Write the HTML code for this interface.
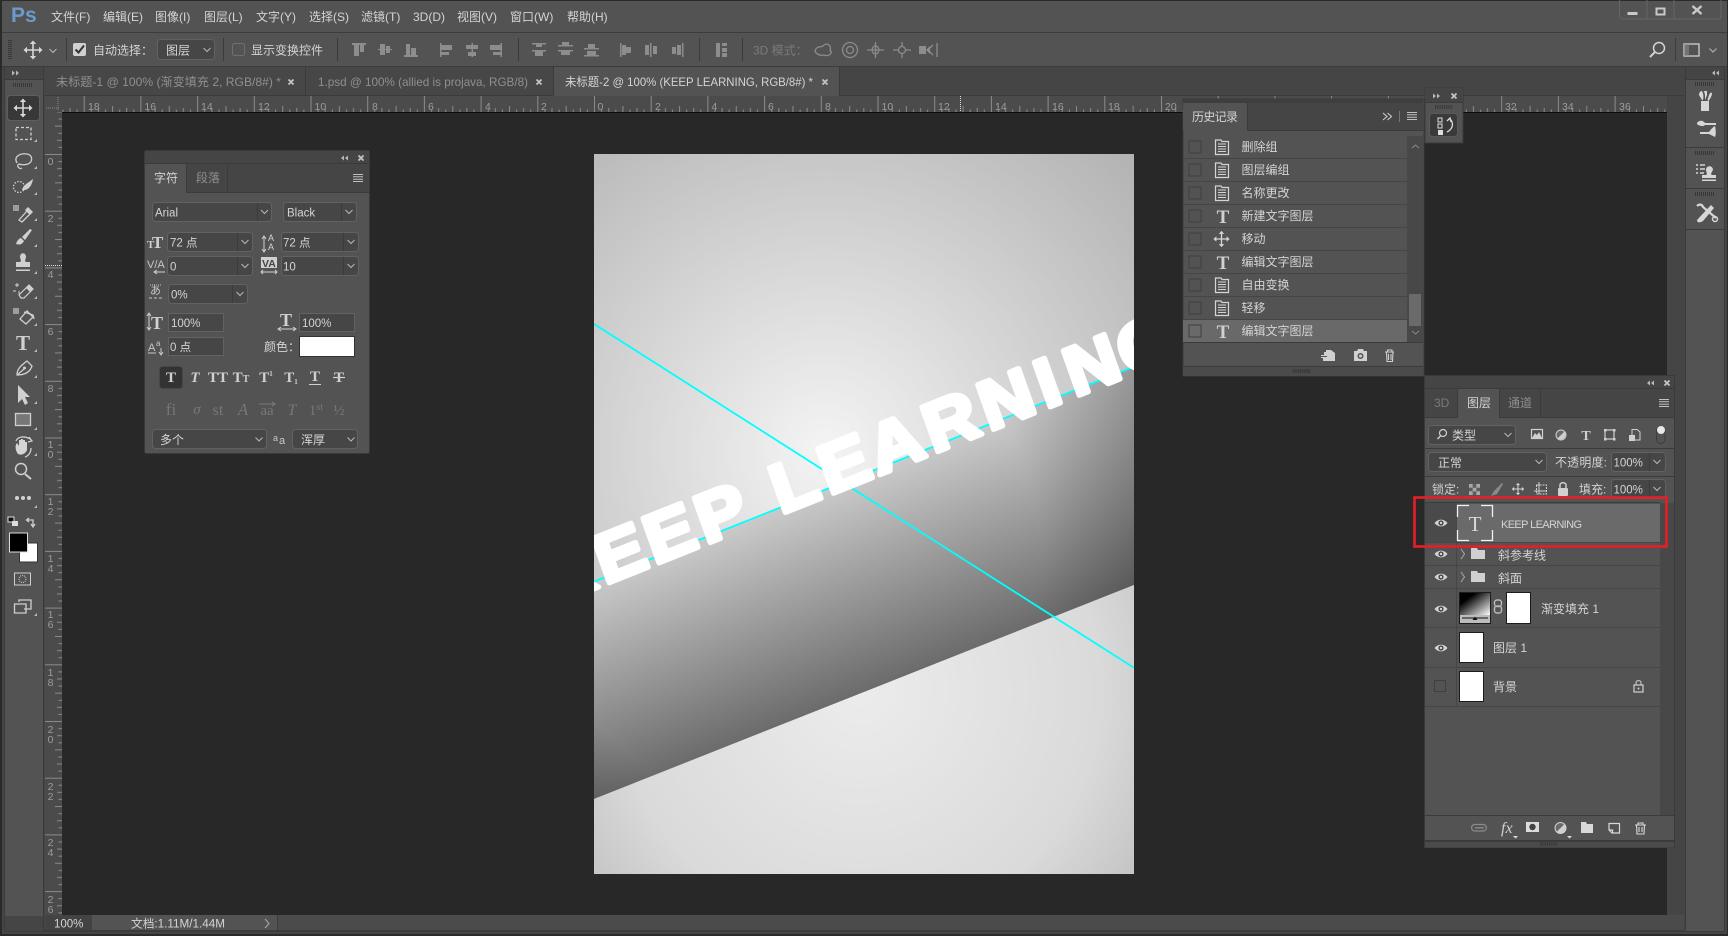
<!DOCTYPE html>
<html>
<head>
<meta charset="utf-8">
<title>Photoshop</title>
<style>
html,body{margin:0;padding:0;background:#2a2a2a;width:1728px;height:936px;overflow:hidden}
svg{display:block}
text{font-family:"Liberation Sans","WenQuanYi Zen Hei","Noto Sans CJK SC",sans-serif;font-size:12px;fill:#d4d4d4}
.m{font-size:12px}
.d{fill:#8f8f8f}
.dd{fill:#7a7a7a}
.r{font-size:10.5px;fill:#9c9c9c}
.rv{font-size:10.5px;fill:#9c9c9c;text-anchor:middle}
.s{font-family:"Liberation Serif",serif;font-weight:bold;fill:#d0d0d0}
.sd{font-family:"Liberation Serif",serif;fill:#777}
.f{fill:#464646;stroke:#626262;stroke-width:1}
.l{stroke:#3b3b3b;stroke-width:1}
.ic{fill:none;stroke:#cfcfcf;stroke-width:1.3}
.id{fill:none;stroke:#8c8c8c;stroke-width:1.3}
.b{fill:#8d8d8d}
.w{fill:#d2d2d2}
.big{font-family:"Liberation Sans",sans-serif;font-weight:bold;font-size:69px;fill:#fff;stroke:#fff;stroke-width:5;stroke-linejoin:round}
</style>
</head>
<body>
<svg xmlns="http://www.w3.org/2000/svg" width="1728" height="936" viewBox="0 0 1728 936">
<defs>
<g id="c"><path d="M-3.5-2 0 1.5 3.5-2" fill="none" stroke="#b8b8b8" stroke-width="1"/></g>
<g id="mv"><path d="M-7 0H7M0-7V7" stroke="#d6d6d6" stroke-width="1.6" fill="none"/><path d="M-9.5 0-6-3.2V3.2ZM9.5 0 6-3.2V3.2ZM0-9.5-3.2-6H3.2ZM0 9.5-3.2 6H3.2Z" fill="#d6d6d6"/></g>
<g id="doc"><path d="M-6.5-7H-1L0-5.5H6.5V7.5H-6.5Z" fill="none" stroke="#d4d4d4" stroke-width="1.2"/><path d="M-4-3H4M-4-.5H4M-4 2H4M-4 4.5H4" stroke="#d4d4d4" stroke-width="1"/></g>
<g id="eye"><path d="M-6.5 0C-3-4.5 3-4.5 6.5 0 3 4.5-3 4.5-6.5 0Z" fill="#d4d4d4"/><circle r="2.6" fill="#444"/><circle r="1.2" fill="#d4d4d4"/></g>
<g id="tri"><path d="M0 3H3V0Z" fill="#bbb"/></g>
<g id="menu"><path d="M-5-3.5H5M-5-1.2H5M-5 1.2H5M-5 3.5H5" stroke="#c0c0c0" stroke-width="1"/></g>
<g id="grip"><path d="M-10 0H10" stroke="#2f2f2f" stroke-width="4" stroke-dasharray="1 1" fill="none" opacity=".75"/></g>
<g id="fold"><path d="M0 0H6L7 2H14V11H0Z" fill="#d0d0d0"/></g>
<g id="cb"><rect x="-6" y="-6" width="12" height="12" fill="none" stroke="#3f3f3f"/></g>
<pattern id="rh" patternUnits="userSpaceOnUse" x="594" y="96" width="56.7" height="17">
<path d="M.5 0V17M7.6 13.5V17M14.7 12V17M21.8 13.5V17M28.9 10V17M36 13.5V17M43 12V17M50.1 13.5V17" stroke="#8b8b8b" stroke-width="1"/>
</pattern>
<pattern id="rv" patternUnits="userSpaceOnUse" x="45" y="154" width="17" height="56.7">
<path d="M0 .5H17M13.5 7.6H17M12 14.7H17M13.5 21.8H17M10 28.9H17M13.5 36H17M12 43H17M13.5 50.1H17" stroke="#8b8b8b" stroke-width="1"/>
</pattern>
<radialGradient id="g1" gradientUnits="userSpaceOnUse" cx="825" cy="450" r="430"><stop offset="0" stop-color="#f4f4f4"/><stop offset="1" stop-color="#b2b2b2"/></radialGradient>
<linearGradient id="g2" gradientUnits="userSpaceOnUse" x1="864" y1="452" x2="960" y2="694"><stop offset="0" stop-color="#d4d4d4"/><stop offset="1" stop-color="#5a5a5a"/></linearGradient>
<radialGradient id="g2b" gradientUnits="userSpaceOnUse" cx="790" cy="560" r="420"><stop offset=".6" stop-color="#000" stop-opacity="0"/><stop offset="1" stop-color="#000" stop-opacity=".3"/></radialGradient>
<radialGradient id="g3" gradientUnits="userSpaceOnUse" cx="860" cy="690" r="400"><stop offset="0" stop-color="#ececec"/><stop offset=".6" stop-color="#dadada"/><stop offset="1" stop-color="#b4b4b4"/></radialGradient>
<linearGradient id="g4" x1="0" y1="0" x2="1" y2="1"><stop offset="0" stop-color="#000"/><stop offset=".25" stop-color="#000"/><stop offset="1" stop-color="#fff"/></linearGradient>
<clipPath id="cv"><rect x="594" y="154" width="540" height="720"/></clipPath>
</defs>

<!-- frame -->
<rect width="1728" height="936" fill="#2a2a2a"/>
<rect x="2" y="1" width="1725" height="933" fill="#454545"/>
<!-- menu -->
<rect x="2" y="1" width="1725" height="31" fill="#535353"/>
<rect x="2" y="32" width="1725" height="1" fill="#3c3c3c"/>
<text x="11" y="22" style="font-size:21px;font-weight:bold;fill:#6c9bcb">Ps</text>
<text class="m" x="51" y="21">文件(F)</text>
<text class="m" x="103" y="21">编辑(E)</text>
<text class="m" x="155" y="21">图像(I)</text>
<text class="m" x="204" y="21">图层(L)</text>
<text class="m" x="256" y="21">文字(Y)</text>
<text class="m" x="309" y="21">选择(S)</text>
<text class="m" x="361" y="21">滤镜(T)</text>
<text class="m" x="413" y="21">3D(D)</text>
<text class="m" x="457" y="21">视图(V)</text>
<text class="m" x="510" y="21">窗口(W)</text>
<text class="m" x="567" y="21">帮助(H)</text>
<!-- window controls -->
<path d="M1619.500 0V16Q1619.500 19 1622.500 19H1718Q1721 19 1721 16V0M1647 0V19M1674 0V19" fill="none" stroke="#666"/>
<rect x="1627.500" y="12" width="10" height="3" fill="#c8c8c8"/>
<rect x="1656.500" y="8.500" width="8" height="6" fill="none" stroke="#c8c8c8" stroke-width="2"/>
<path d="M1692.500 6 1701.500 14M1701.500 6 1692.500 14" stroke="#c8c8c8" stroke-width="2.4"/>

<!-- options bar -->
<rect x="2" y="33" width="1725" height="33" fill="#535353"/>
<rect x="2" y="66" width="1725" height="1" fill="#3c3c3c"/>
<use href="#grip" transform="translate(10 50) rotate(90)"/>
<use href="#mv" x="33" y="50"/>
<use href="#c" x="53" y="51"/>
<path class="l" d="M66.500 38V61M223.500 38V61M337.500 38V61M518.500 38V61M699.500 38V61M742.500 38V61M1675.500 38V61"/>
<rect x="73" y="43" width="13" height="13" rx="2" fill="#d0d0d0"/>
<path d="M75.500 49.500 78.500 52.500 84 45.500" fill="none" stroke="#333" stroke-width="2"/>
<text x="93" y="54.500">自动选择：</text>
<rect class="f" x="157.500" y="39.500" width="57" height="20" rx="3"/>
<text x="166" y="54.500">图层</text>
<use href="#c" x="207" y="50"/>
<rect x="232.500" y="43.500" width="12" height="12" rx="2" fill="none" stroke="#6f6f6f"/>
<text x="251" y="54.500">显示变换控件</text>
<!-- align icons -->
<g class="b">
<rect x="352" y="43" width="14" height="2"/><rect x="354" y="45" width="5" height="11"/><rect x="360" y="45" width="4" height="7"/>
<rect x="378" y="49" width="14" height="1"/><rect x="380" y="44" width="5" height="11"/><rect x="386" y="46" width="4" height="7"/>
<rect x="404" y="55" width="14" height="2"/><rect x="406" y="44" width="4" height="11"/><rect x="411" y="48" width="5" height="7"/>
<rect x="440" y="43" width="1.500" height="14"/><rect x="441" y="45" width="11" height="5"/><rect x="441" y="52" width="8" height="3"/>
<rect x="471.500" y="43" width="1.500" height="14"/><rect x="466" y="45" width="12" height="4"/><rect x="468" y="52" width="8" height="4"/>
<rect x="500.500" y="43" width="1.500" height="14"/><rect x="490" y="45" width="11" height="5"/><rect x="493" y="52" width="8" height="3"/>
<rect x="532" y="43" width="14" height="1.500"/><rect x="532" y="50" width="14" height="1.500"/><rect x="536" y="44" width="6" height="3"/><rect x="535" y="51" width="8" height="5"/>
<rect x="558" y="45" width="15" height="1.500"/><rect x="558" y="50" width="15" height="1.500"/><rect x="562" y="42" width="7" height="3"/><rect x="561" y="51" width="9" height="4"/>
<rect x="584" y="48" width="15" height="1.500"/><rect x="584" y="55" width="15" height="1.500"/><rect x="588" y="44" width="7" height="4"/><rect x="587" y="51" width="9" height="4"/>
<rect x="620" y="43" width="1.500" height="14"/><rect x="622" y="45" width="4" height="10"/><rect x="626" y="47" width="5" height="6"/>
<rect x="650" y="43" width="1.500" height="14"/><rect x="645" y="45" width="4" height="10"/><rect x="653" y="46" width="4" height="8"/>
<rect x="682" y="43" width="1.500" height="14"/><rect x="672" y="47" width="4" height="7"/><rect x="677" y="45" width="4" height="10"/>
<rect x="716" y="43" width="4" height="14"/><rect x="722" y="43" width="5" height="3"/><rect x="722" y="48" width="5" height="4"/><rect x="722" y="53" width="5" height="4"/>
</g>
<text class="dd" x="753" y="54.500">3D 模式：</text>
<g class="id">
<path d="M815 51C816 46 822 47 823 46 826 42 832 45 830 50 834 54 827 57 824 55 820 56 816 54 815 51Z"/>
<circle cx="850" cy="50" r="7.500"/><circle cx="850" cy="50" r="3.500"/>
<path d="M875.500 42V58M867 50H884M875.500 46C871 46 871 54 875.500 54 880 54 880 46 875.500 46Z"/>
<circle cx="902" cy="50" r="3.500"/><path d="M902 42V46M902 54V58M893 50H898M906 50H911"/>
<path d="M933 45 928 50 933 55M937 43V57" />
</g>
<rect x="919" y="46" width="7" height="8" class="b"/><path d="M926 50 930 46V54Z" class="b"/>
<!-- search + workspace -->
<circle cx="1659" cy="48" r="5.500" fill="none" stroke="#d4d4d4" stroke-width="1.500"/>
<path d="M1655 52 1650 57" stroke="#d4d4d4" stroke-width="2"/>
<rect x="1684" y="44" width="15" height="12" fill="none" stroke="#cfcfcf" stroke-width="1.300"/>
<rect x="1684" y="44" width="5" height="12" fill="#8a8a8a" opacity=".6"/>
<use href="#c" x="1713" y="50.500"/>

<!-- tab bar -->
<rect x="44" y="67" width="1640" height="29" fill="#454545"/>
<rect x="44" y="67" width="261" height="28" fill="#474747"/>
<rect x="305" y="67" width="249" height="28" fill="#474747"/>
<rect x="554" y="67" width="285" height="29" fill="#535353"/>
<path class="l" d="M305.500 67V95M553.500 67V95M839.500 67V95M44 95.500H554M839 95.500H1684"/>
<text class="d" x="56" y="86" textLength="225" lengthAdjust="spacingAndGlyphs">未标题-1 @ 100% (渐变填充 2, RGB/8#) *</text>
<text class="d" x="318" y="86" textLength="210" lengthAdjust="spacingAndGlyphs">1.psd @ 100% (allied is projava, RGB/8)</text>
<text x="565" y="86" textLength="248" lengthAdjust="spacingAndGlyphs">未标题-2 @ 100% (KEEP LEARNING, RGB/8#) *</text>
<path d="M288.500 79.500 293.500 84.500M293.500 79.500 288.500 84.500M536.500 79.500 541.500 84.500M541.500 79.500 536.500 84.500M822.500 79.500 827.500 84.500M827.500 79.500 822.500 84.500" stroke="#c4c4c4" stroke-width="1.800"/>

<!-- left toolbar -->
<rect x="5" y="67" width="38" height="849" fill="#535353"/>
<rect x="5" y="67" width="38" height="12" fill="#454545"/>
<path d="M12 70.500 15 73 12 75.500ZM16 70.500 19 73 16 75.500Z" fill="#b8b8b8"/>
<path class="l" d="M4.500 67V932M43.500 67V932M5 79.500H43M5 931.500H44"/>
<use href="#grip" x="23" y="85"/>
<rect x="7.500" y="95.500" width="32" height="25" rx="3" fill="#383838" stroke="#5e5e5e"/>
<use href="#mv" x="23" y="108"/>
<!-- marquee -->
<rect x="16" y="127.500" width="15" height="12" fill="none" stroke="#cfcfcf" stroke-width="1.300" stroke-dasharray="3 2"/>
<!-- lasso -->
<path class="ic" d="M17 163C13 156 21 153 27 154 33 155 33 162 28 164 25 165 21 165 19 164 16 165 19 170 22 168" />
<!-- quick select -->
<circle cx="19" cy="187" r="5.500" fill="none" stroke="#d0d0d0" stroke-width="1.300" stroke-dasharray="1.500 1.500"/>
<path d="M22 190C23 185 28 183 33 179 32 185 29 191 22 190Z" fill="#d0d0d0"/>
<!-- eyedropper -->
<rect x="13" y="205" width="6" height="6" fill="#b0b0b0" opacity=".8"/>
<path class="ic" d="M19 220 27 211 30 214 22 222Z"/><path d="M28 207 33 212 30 215 25 210Z" fill="#d0d0d0"/>
<!-- brush -->
<path d="M16 244C17 240 20 238 21 238L24 241C22 245 19 245 16 244ZM22 237 30 229 32 230 25 240Z" fill="#d0d0d0"/>
<!-- stamp -->
<path d="M16 267H30V262H26C24 261 26 259 26 257 26 252 20 252 20 257 20 259 22 261 20 262H16ZM16 269.500H30V271H16Z" fill="#d0d0d0"/>
<!-- eraser -->
<path d="M19 295 29 285 33 289 24 298H21Z" fill="none" stroke="#d0d0d0" stroke-width="1.200"/><path d="M26 288 29 285 33 289 30 292Z" fill="#d0d0d0"/><path d="M15 285H19M17 283V287M13 291H16M19 291V294" stroke="#d0d0d0"/>
<!-- bucket -->
<rect x="13" y="308" width="6" height="6" fill="#b0b0b0" opacity=".8"/>
<path class="ic" d="M20 319 27 311 33 317 26 324Z"/><path d="M24 312 33 315 34 319" class="ic"/>
<!-- T -->
<text class="s" x="23" y="350" text-anchor="middle" style="font-size:21px">T</text>
<!-- pen -->
<path class="ic" d="M17 375C17 368 22 365 27 361L32 366C30 372 25 375 17 375ZM17 375 24 369"/><circle cx="24.500" cy="368" r="1.500" fill="#cfcfcf"/>
<!-- arrow -->
<path d="M18 385V403L22 399 25 405 28 403 25 397H30Z" fill="#d0d0d0"/>
<!-- rect -->
<rect x="15.500" y="413.500" width="15" height="12" fill="#777" stroke="#cfcfcf" stroke-width="1.300"/>
<!-- hand -->
<path d="M18 454C15 450 15 445 17 443L19 446V440H21V446 439H23V446 440H25V446 442H27V450C26 453 22 456 18 454Z" fill="#d4d4d4"/>
<path class="ic" d="M16 441C18 436 25 436 30 439M31 448C31 453 28 456 25 457M29 437 32 441 28 442"/>
<!-- zoom -->
<circle cx="21" cy="469" r="5.500" fill="none" stroke="#d0d0d0" stroke-width="1.500"/><path d="M25 474 31 479" stroke="#d0d0d0" stroke-width="2"/>
<!-- dots -->
<circle cx="17" cy="498" r="2" class="w"/><circle cx="23" cy="498" r="2" class="w"/><circle cx="29" cy="498" r="2" class="w"/>
<g><use href="#tri" x="34" y="139"/><use href="#tri" x="34" y="166"/><use href="#tri" x="34" y="192"/><use href="#tri" x="34" y="218"/><use href="#tri" x="34" y="244"/><use href="#tri" x="34" y="271"/><use href="#tri" x="34" y="296"/><use href="#tri" x="34" y="323"/><use href="#tri" x="34" y="349"/><use href="#tri" x="34" y="375"/><use href="#tri" x="34" y="401"/><use href="#tri" x="34" y="427"/><use href="#tri" x="34" y="453"/><use href="#tri" x="34" y="505"/><use href="#tri" x="34" y="613"/></g>
<!-- swap + colors -->
<rect x="8" y="517" width="6" height="5" fill="#111" stroke="#ddd"/><rect x="12" y="521" width="6" height="5" fill="#ddd"/>
<path class="ic" d="M27 520H33V526M29 518 26.500 520 29 522M31 524 33 527 35 524"/>
<rect x="19.500" y="543" width="18" height="19" fill="#fff" stroke="#333"/>
<rect x="9.500" y="533" width="18" height="19" fill="#000" stroke="#ddd"/>
<rect x="14.500" y="573" width="16" height="12" fill="none" stroke="#cfcfcf"/><circle cx="22.500" cy="579" r="3.500" fill="none" stroke="#cfcfcf" stroke-dasharray="1 1"/>
<path class="ic" d="M19 602V600H31V609H24M14.500 604H26V613H14.500Z"/>

<!-- rulers -->
<rect x="45" y="96" width="1622" height="16" fill="#4b4b4b"/>
<rect x="45" y="112" width="17" height="803" fill="#4b4b4b"/>
<rect x="62" y="96" width="1605" height="16" fill="url(#rh)"/>
<rect x="45" y="112" width="17" height="803" fill="url(#rv)"/>
<rect x="45" y="96" width="17" height="16" fill="#4b4b4b"/>
<path d="M58 97V111M46 108H60" stroke="#8a8a8a" stroke-dasharray="1 1"/>
<path d="M960.500 96V112M45 265.500H62" stroke="#e0e0e0" stroke-dasharray="1 1"/>
<g>
<text class="r" x="88" y="110">18</text><text class="r" x="144.400" y="110">16</text><text class="r" x="201" y="110">14</text><text class="r" x="258" y="110">12</text><text class="r" x="314.500" y="110">10</text><text class="r" x="372" y="110">8</text><text class="r" x="428" y="110">6</text><text class="r" x="485" y="110">4</text><text class="r" x="541" y="110">2</text><text class="r" x="597.500" y="110">0</text><text class="r" x="655" y="110">2</text><text class="r" x="711.500" y="110">4</text><text class="r" x="768" y="110">6</text><text class="r" x="825" y="110">8</text><text class="r" x="881.500" y="110">10</text><text class="r" x="938" y="110">12</text><text class="r" x="995" y="110">14</text><text class="r" x="1052" y="110">16</text><text class="r" x="1108" y="110">18</text><text class="r" x="1165" y="110">20</text><text class="r" x="1505" y="110">32</text><text class="r" x="1562" y="110">34</text><text class="r" x="1619" y="110">36</text>
<text class="rv" x="50.500" y="165">0</text><text class="rv" x="50.500" y="222">2</text><text class="rv" x="50.500" y="278">4</text><text class="rv" x="50.500" y="335">6</text><text class="rv" x="50.500" y="392">8</text>
<text class="rv" x="50.500" y="448">1</text><text class="rv" x="50.500" y="458">0</text>
<text class="rv" x="50.500" y="505">1</text><text class="rv" x="50.500" y="515">2</text>
<text class="rv" x="50.500" y="562">1</text><text class="rv" x="50.500" y="572">4</text>
<text class="rv" x="50.500" y="618">1</text><text class="rv" x="50.500" y="628">6</text>
<text class="rv" x="50.500" y="676">1</text><text class="rv" x="50.500" y="686">8</text>
<text class="rv" x="50.500" y="733">2</text><text class="rv" x="50.500" y="743">0</text>
<text class="rv" x="50.500" y="790">2</text><text class="rv" x="50.500" y="800">2</text>
<text class="rv" x="50.500" y="846">2</text><text class="rv" x="50.500" y="856">4</text>
<text class="rv" x="50.500" y="903">2</text><text class="rv" x="50.500" y="913">6</text>
</g>

<!-- document area -->
<rect x="62" y="112" width="1605" height="803" fill="#282828"/>
<rect x="62" y="112" width="1605" height="1" fill="#0c0c0c"/>
<rect x="1667" y="96" width="17" height="819" fill="#454545"/>
<!-- canvas -->
<g clip-path="url(#cv)">
<rect x="594" y="154" width="540" height="720" fill="url(#g1)"/>
<polygon points="594,581.700 1134,366.700 1134,585 594,799" fill="url(#g2)"/>
<polygon points="594,581.700 1134,366.700 1134,585 594,799" fill="url(#g2b)"/>
<polygon points="594,799 1134,585 1134,874 594,874" fill="url(#g3)"/>
<path d="M594 324 1134 667.800M594 581.700 1134 366.700" stroke="#00ffff" stroke-width="1.800"/>
<text class="big" transform="matrix(1.003 -.4 .337 .941 784.600 515)" y="-2" x="-234 -178.700 -129 -78 -30 -3 45 94 149 204.600 261 290 342">KEEP LEARNING</text>
</g>

<!-- status bar -->
<rect x="45" y="915" width="1639" height="15" fill="#4b4b4b"/>
<rect x="45.500" y="915" width="47" height="15" fill="#434343"/>
<rect x="92" y="915" width="185" height="15" fill="#535353"/>
<path d="M277.500 915V930" stroke="#3d3d3d"/>
<text x="54" y="927.500" style="font-size:11.500px">100%</text>
<text x="131" y="927.500" style="font-size:11.500px" textLength="94" lengthAdjust="spacingAndGlyphs">文档:1.11M/1.44M</text>
<path d="M265 919 269 923.500 265 928" fill="none" stroke="#aaa"/>
<rect x="44" y="930" width="1640" height="2" fill="#3b3b3b"/>

<!-- right dock -->
<rect x="1684" y="67" width="43" height="865" fill="#454545"/>
<rect x="1686" y="79" width="38" height="853" fill="#535353"/>
<rect x="1686" y="67" width="38" height="12" fill="#454545"/>
<path class="l" d="M1685.500 67V932M1724.500 67V932M1686 79.500H1724M1686 147.500H1724M1686 188.500H1724M1686 229.500H1724M1686 931.500H1724"/>
<path d="M1715 70.500 1712 73 1715 75.500ZM1719 70.500 1716 73 1719 75.500Z" fill="#b8b8b8"/>
<use href="#grip" x="1705" y="84"/><use href="#grip" x="1705" y="153"/><use href="#grip" x="1705" y="194"/>
<!-- dock icons -->
<g transform="translate(0 -1)">
<path d="M1701 102H1709V112H1701Z" fill="#d6d6d6"/>
<path d="M1702 101 1699 96C1699 93 1701 92 1702 92 1703 94 1704 97 1703 101ZM1705 101V96L1704 92 1707 92V96ZM1707.500 101 1709 96C1710 94 1711 93 1712 94 1712 97 1710 100 1708.500 102Z" fill="#d6d6d6"/>
</g>
<path d="M1697 123C1699 120 1703 120 1705 123H1716V125H1705C1703 127 1699 126 1697 124ZM1700 132H1709C1711 129 1713 127 1715 126 1716 130 1716 135 1715 137 1713 136 1711 135 1709 134H1700Z" fill="#d6d6d6"/>
<path d="M1696 165H1698M1700 165H1705M1696 169H1698M1700 169H1705M1696 173H1698M1700 173H1704" stroke="#d6d6d6" stroke-width="1.500"/>
<path d="M1702 178H1716V175H1712C1710 174 1712 172 1713 170 1713 165 1706 165 1706 170 1706 172 1708 174 1706 175H1702ZM1702 179.500H1716V181H1702Z" fill="#d6d6d6"/>
<path d="M1697 220 1711 205 1714 208 1703 221C1700 223 1697 223 1697 220Z" fill="#d6d6d6"/>
<path d="M1697 206C1699 204 1702 204 1703 207L1716 218" fill="none" stroke="#d6d6d6" stroke-width="2.200"/><circle cx="1715" cy="219" r="2.500" fill="none" stroke="#d6d6d6" stroke-width="1.500"/>

<!-- mini history panel -->
<rect x="1425" y="88" width="38" height="55" fill="#535353" stroke="#3a3a3a"/>
<rect x="1425" y="88" width="38" height="14" fill="#454545"/>
<path class="l" d="M1425 102.500H1463"/>
<path d="M1433 93.500 1436 96 1433 98.500ZM1437 93.500 1440 96 1437 98.500Z" fill="#b8b8b8"/>
<path d="M1451.500 93.500 1456.500 98.500M1456.500 93.500 1451.500 98.500" stroke="#c4c4c4" stroke-width="1.800"/>
<use href="#grip" transform="translate(1444 107) scale(.9 1)"/>
<rect x="1429.500" y="113.500" width="28" height="23" rx="3" fill="#3a3a3a" stroke="#5a5a5a"/>
<rect x="1438" y="118" width="4" height="4" fill="none" stroke="#ddd"/><rect x="1438" y="124" width="4" height="4" fill="none" stroke="#ddd"/><rect x="1438" y="130" width="5" height="5" fill="#ddd"/>
<path d="M1447 121 1450 118 1451 122 M1450 119C1454 123 1453 129 1447 132" fill="none" stroke="#ddd" stroke-width="1.300"/>

<!-- history panel -->
<rect x="1183" y="99" width="241" height="277" fill="#535353" stroke="#3a3a3a"/>
<rect x="1183" y="99" width="240" height="4" fill="#3e3e3e"/>
<rect x="1183" y="103" width="240" height="27" fill="#454545"/>
<rect x="1183" y="103" width="64" height="27" fill="#535353"/>
<path class="l" d="M1247.500 103V130M1247 130.500H1423"/>
<text x="1192" y="121" textLength="46">历史记录</text>
<path d="M1383 113 1387 116.500 1383 120M1387.500 113 1391.500 116.500 1387.500 120" fill="none" stroke="#ccc" stroke-width="1.100"/>
<path d="M1399.500 111V122" stroke="#777"/>
<use href="#menu" x="1412" y="116"/>
<rect x="1407" y="136" width="16" height="206" fill="#484848"/>
<path d="M1412 148 1415.500 145 1419 148M1412 331 1415.500 334 1419 331" fill="none" stroke="#8a8a8a"/>
<rect x="1409" y="294" width="12" height="32" fill="#6a6a6a"/>
<path stroke="#454545" d="M1183 158.500H1407M1183 181.500H1407M1183 204.500H1407M1183 227.500H1407M1183 250.500H1407M1183 273.500H1407M1183 296.500H1407M1183 319.500H1407"/>
<rect x="1183" y="320" width="224" height="22" fill="#696969"/>
<path class="l" d="M1183 342.500H1423M1183 366.500H1423"/>
<rect x="1183" y="367" width="240" height="9" fill="#4b4b4b"/>
<use href="#grip" transform="translate(1302 371) scale(.9 1)"/>
<g><use href="#cb" x="1195" y="147"/><use href="#cb" x="1195" y="170"/><use href="#cb" x="1195" y="193"/><use href="#cb" x="1195" y="216"/><use href="#cb" x="1195" y="239"/><use href="#cb" x="1195" y="262"/><use href="#cb" x="1195" y="285"/><use href="#cb" x="1195" y="308"/><use href="#cb" x="1195" y="331"/></g>
<use href="#doc" x="1222" y="147"/><use href="#doc" x="1222" y="170"/><use href="#doc" x="1222" y="193"/>
<text class="s" x="1223" y="223" text-anchor="middle" style="font-size:19px">T</text>
<use href="#mv" transform="translate(1221.500 239) scale(.85)"/>
<text class="s" x="1223" y="269" text-anchor="middle" style="font-size:19px">T</text>
<use href="#doc" x="1222" y="285"/><use href="#doc" x="1222" y="308"/>
<text class="s" x="1223" y="338" text-anchor="middle" style="font-size:19px">T</text>
<text x="1241.500" y="151">删除组</text>
<text x="1241.500" y="174">图层编组</text>
<text x="1241.500" y="197">名称更改</text>
<text x="1241.500" y="220">新建文字图层</text>
<text x="1241.500" y="243">移动</text>
<text x="1241.500" y="266">编辑文字图层</text>
<text x="1241.500" y="289">自由变换</text>
<text x="1241.500" y="312">轻移</text>
<text x="1241.500" y="335">编辑文字图层</text>
<!-- history footer -->
<path d="M1326 350H1331L1335 353V361H1323V358H1321V355H1324V352H1326Z" fill="#d0d0d0"/><path d="M1321 356.500H1327" stroke="#535353"/>
<path d="M1354 351H1357L1358 349H1363L1364 351H1367V361H1354Z" fill="#d0d0d0"/><circle cx="1360.500" cy="356" r="3" fill="#535353"/><circle cx="1360.500" cy="356" r="1.500" fill="#d0d0d0"/>
<path class="ic" d="M1385 352H1394M1386.500 352 1387 361.500H1392.500L1393 352M1387.500 352V350H1392V352M1388.500 354V360M1391 354V360" style="stroke-width:1.100"/>

<!-- character panel -->
<rect x="144.500" y="150.500" width="225" height="303" rx="2" fill="#535353" stroke="#3a3a3a"/>
<rect x="145" y="151" width="224" height="12" fill="#454545"/>
<rect x="145" y="163" width="224" height="29" fill="#454545"/>
<rect x="145" y="164" width="41" height="28" fill="#535353"/>
<path class="l" d="M145 163.500H369M186.500 164V192M227.500 164V192M186 192.500H369"/>
<path d="M344 155.500 341 158 344 160.500ZM348 155.500 345 158 348 160.500Z" fill="#b8b8b8"/>
<path d="M358.500 155.500 363.500 160.500M363.500 155.500 358.500 160.500" stroke="#c4c4c4" stroke-width="1.800"/>
<text x="154" y="182">字符</text>
<text class="d" x="196" y="182">段落</text>
<use href="#menu" x="358" y="178"/>
<!-- font row -->
<rect class="f" x="152.500" y="202.500" width="119" height="19" rx="3"/><path class="l" d="M257.500 203V221"/><use href="#c" x="264.500" y="212"/>
<text x="155" y="216.500" style="font-size:11.500px">Arial</text>
<rect class="f" x="283.500" y="202.500" width="73" height="19" rx="3"/><path class="l" d="M341.500 203V221"/><use href="#c" x="349" y="212"/>
<text x="287" y="216.500" style="font-size:11.500px">Black</text>
<!-- size row -->
<text class="s" x="147" y="248" style="font-size:11px">T</text><text class="s" x="152" y="248" style="font-size:17px">T</text>
<rect class="f" x="167.500" y="232.500" width="85" height="19" rx="3"/><path class="l" d="M237.500 233V251"/><use href="#c" x="245" y="242"/>
<text x="170" y="246.500" style="font-size:11.500px">72 点</text>
<text x="268" y="241" style="font-size:9px">A</text><text x="268" y="250" style="font-size:9px">A</text><path d="M264 236V250M262 238 264 235 266 238M262 248 264 251 266 248" fill="none" stroke="#d0d0d0" transform="translate(0 1)"/>
<rect class="f" x="281.500" y="232.500" width="77" height="19" rx="3"/><path class="l" d="M343.500 233V251"/><use href="#c" x="351" y="242"/>
<text x="283" y="246.500" style="font-size:11.500px">72 点</text>
<!-- kern row -->
<text x="147" y="268" style="font-size:11px;fill:#c8c8c8">V/A</text><path d="M165 272H154M157 270 154 272 157 274" fill="none" stroke="#d0d0d0"/>
<rect class="f" x="167.500" y="256.500" width="85" height="19" rx="3"/><path class="l" d="M237.500 257V275"/><use href="#c" x="245" y="266"/>
<text x="170" y="270.500" style="font-size:11.500px">0</text>
<rect x="261" y="257" width="16" height="11" fill="#d0d0d0"/><text x="262" y="267" style="font-size:10.500px;font-weight:bold;fill:#444">VA</text><path d="M261 272H277M263 270 261 272 263 274M275 270 277 272 275 274" fill="none" stroke="#d0d0d0"/>
<rect class="f" x="281.500" y="256.500" width="77" height="19" rx="3"/><path class="l" d="M343.500 257V275"/><use href="#c" x="351" y="266"/>
<text x="283" y="270.500" style="font-size:11.500px">10</text>
<!-- tsume row -->
<text x="150" y="294" style="font-size:11px;fill:#c8c8c8">あ</text><path d="M149 298H163" stroke="#c8c8c8" stroke-dasharray="3 2"/><path d="M150 285H162" stroke="#c8c8c8" stroke-dasharray="1 1"/>
<rect class="f" x="168.500" y="284.500" width="79" height="19" rx="3"/><path class="l" d="M232.500 285V303"/><use href="#c" x="240" y="294"/>
<text x="171" y="298.500" style="font-size:11.500px">0%</text>
<!-- scale row -->
<text class="s" x="151" y="329" style="font-size:18px">T</text><path d="M149 314V329M147 316 149 313 151 316M147 327 149 330 151 327" fill="none" stroke="#d0d0d0"/>
<rect class="f" x="168.500" y="313.500" width="55" height="18" fill-opacity=".9"/>
<text x="171" y="327" style="font-size:11.500px">100%</text>
<text class="s" x="280" y="326" style="font-size:18px">T</text><path d="M279 329H295M281 327 278 329 281 331M293 327 296 329 293 331" fill="none" stroke="#d0d0d0"/>
<rect class="f" x="299.500" y="313.500" width="55" height="18"/>
<text x="302" y="327" style="font-size:11.500px">100%</text>
<!-- baseline row -->
<text x="148" y="351" style="font-size:11px;fill:#c8c8c8">A</text><text x="156" y="346" style="font-size:8px;fill:#c8c8c8">a</text><path d="M148 353H156M161 348V354M159 352 161 355 163 352" fill="none" stroke="#c8c8c8"/>
<rect class="f" x="168.500" y="337.500" width="55" height="18"/>
<text x="170" y="351" style="font-size:11.500px">0 点</text>
<text x="264" y="351">颜色：</text>
<rect x="299.500" y="336.500" width="55" height="20" fill="#fff" stroke="#333"/>
<!-- style buttons -->
<rect x="159.500" y="366.500" width="23" height="22" rx="3" fill="#333" stroke="#474747"/>
<g style="font-size:14px">
<text class="s" x="171" y="382" text-anchor="middle" style="font-size:15px">T</text>
<text class="s" x="195" y="382" text-anchor="middle" style="font-size:15px;font-style:italic">T</text>
<text class="s" x="218" y="382" text-anchor="middle" style="font-size:15px">TT</text>
<text class="s" x="241" y="382" text-anchor="middle" style="font-size:15px">T<tspan style="font-size:10px">T</tspan></text>
<text class="s" x="266" y="382" text-anchor="middle" style="font-size:15px">T<tspan dy="-6" style="font-size:7px">1</tspan></text>
<text class="s" x="291" y="382" text-anchor="middle" style="font-size:15px">T<tspan dy="2" style="font-size:7px">1</tspan></text>
<text class="s" x="315" y="381" text-anchor="middle" style="font-size:15px">T</text><path d="M309 384.500H321" stroke="#d0d0d0"/>
<text class="s" x="339" y="382" text-anchor="middle" style="font-size:15px">T</text><path d="M333 377.500H345" stroke="#d0d0d0" stroke-width="1.200"/>
</g>
<text class="sd" x="171" y="415" text-anchor="middle" style="font-size:17px">fi</text>
<text class="sd" x="197" y="414" text-anchor="middle" style="font-size:15px;font-style:italic">σ</text>
<text class="sd" x="218" y="415" text-anchor="middle" style="font-size:16px">st</text>
<text class="sd" x="243" y="415" text-anchor="middle" style="font-size:17px;font-style:italic">A</text>
<text class="sd" x="267" y="415" text-anchor="middle" style="font-size:15px">aa</text><path d="M259 404H275M272 402 275 404 272 406" fill="none" stroke="#7a7a7a"/>
<text class="sd" x="292" y="415" text-anchor="middle" style="font-size:16px;font-style:italic">T</text>
<text class="sd" x="316" y="415" text-anchor="middle" style="font-size:15px">1<tspan dy="-5" style="font-size:10px">st</tspan></text>
<text class="sd" x="339" y="415" text-anchor="middle" style="font-size:15px">½</text>
<!-- bottom row -->
<rect class="f" x="152.500" y="429.500" width="114" height="19" rx="3"/><use href="#c" x="259" y="439.500"/>
<text x="160" y="444">多个</text>
<text x="273" y="441" style="font-size:9px;fill:#c8c8c8">a</text><text x="279" y="444" style="font-size:11px;fill:#c8c8c8">a</text>
<rect class="f" x="292.500" y="429.500" width="65" height="19" rx="3"/><use href="#c" x="351" y="439.500"/>
<text x="301" y="444">浑厚</text>

<!-- layers panel -->
<rect x="1424.500" y="375.500" width="250" height="472" fill="#535353" stroke="#3a3a3a"/>
<rect x="1425" y="376" width="249" height="12" fill="#454545"/>
<rect x="1425" y="388" width="249" height="29" fill="#454545"/>
<rect x="1458" y="389" width="41" height="28" fill="#535353"/>
<path class="l" d="M1425 388.500H1674M1457.500 389V417M1499.500 389V417M1540.500 389V417M1425 417.500H1458M1499 417.500H1674"/>
<path d="M1650 380.500 1647 383 1650 385.500ZM1654 380.500 1651 383 1654 385.500Z" fill="#b8b8b8"/>
<path d="M1664.500 380.500 1669.500 385.500M1669.500 380.500 1664.500 385.500" stroke="#c4c4c4" stroke-width="1.800"/>
<text class="dd" x="1434" y="407">3D</text>
<text x="1467" y="407">图层</text>
<text class="d" x="1508" y="407">通道</text>
<use href="#menu" x="1664" y="403"/>
<!-- filter row -->
<rect class="f" x="1428.500" y="425.500" width="87" height="19" rx="3"/>
<circle cx="1443" cy="433" r="3.500" fill="none" stroke="#d0d0d0" stroke-width="1.200"/><path d="M1440.500 436 1437.500 439" stroke="#d0d0d0" stroke-width="1.500"/>
<text x="1452" y="439.500">类型</text><use href="#c" x="1508" y="435"/>
<rect x="1531.500" y="429.500" width="11" height="9" fill="none" stroke="#d0d0d0" stroke-width="1.200"/><path d="M1532 438 1535 433 1537 435 1539 432 1542 438Z" fill="#d0d0d0"/>
<circle cx="1561" cy="435" r="5" fill="#6a6a6a" stroke="#d0d0d0"/><path d="M1564.500 431.500 1557.500 438.500A5 5 0 0 0 1564.500 431.500Z" fill="#d0d0d0"/>
<text class="s" x="1586" y="440" text-anchor="middle" style="font-size:14px">T</text>
<rect x="1605" y="430" width="9" height="9" fill="none" stroke="#d0d0d0" stroke-width="1.200"/><g fill="#d0d0d0"><rect x="1604" y="429" width="2.500" height="2.500"/><rect x="1613" y="429" width="2.500" height="2.500"/><rect x="1604" y="438" width="2.500" height="2.500"/><rect x="1613" y="438" width="2.500" height="2.500"/></g>
<path d="M1632 429.500H1637L1640 432V440H1632Z" fill="none" stroke="#d0d0d0"/><rect x="1629" y="435" width="6" height="6" fill="#d0d0d0"/>
<rect x="1656.500" y="426.500" width="8.500" height="17" rx="4" fill="none" stroke="#3d3d3d"/><circle cx="1661" cy="430" r="4" fill="#e8e8e8"/>
<path class="l" d="M1425 448.500H1674M1425 476.500H1674"/>
<!-- blend row -->
<rect class="f" x="1428.500" y="452.500" width="118" height="19" rx="3"/><text x="1438" y="467">正常</text><use href="#c" x="1539" y="462"/>
<text x="1555" y="466.500" textLength="52">不透明度:</text>
<rect class="f" x="1611.500" y="452.500" width="54" height="19" rx="3"/><path class="l" d="M1649.500 453V471"/><use href="#c" x="1657" y="462"/><text x="1613.500" y="466.500" style="font-size:11.500px">100%</text>
<!-- lock row -->
<text x="1432" y="493.500">锁定:</text>
<g fill="#a8a8a8"><rect x="1469" y="484" width="11" height="11" fill="#5c5c5c"/><rect x="1469" y="484" width="3.700" height="3.700"/><rect x="1476.300" y="484" width="3.700" height="3.700"/><rect x="1472.700" y="487.700" width="3.700" height="3.700"/><rect x="1469" y="491.300" width="3.700" height="3.700"/><rect x="1476.300" y="491.300" width="3.700" height="3.700"/></g>
<path d="M1491 496 1494 491 1502 483 1503 484 1497 494Z" fill="#8a8a8a"/>
<use href="#mv" transform="translate(1518 489) scale(.65)"/>
<rect x="1536.500" y="485" width="10" height="9" fill="none" stroke="#d0d0d0" stroke-dasharray="2 1"/><path d="M1539 482V494M1534 491H1547" stroke="#d0d0d0"/>
<rect x="1558" y="488" width="10" height="8" rx="1" fill="#d0d0d0"/><path d="M1560 488V485C1560 482 1566 482 1566 485V488" fill="none" stroke="#d0d0d0" stroke-width="1.500"/>
<text x="1579" y="493.500">填充:</text>
<rect class="f" x="1611.500" y="479.500" width="54" height="19" rx="3"/><path class="l" d="M1649.500 480V498"/><use href="#c" x="1657" y="489"/><text x="1613.500" y="493.500" style="font-size:11.500px">100%</text>
<!-- layer list -->
<rect x="1660" y="503" width="14" height="312" fill="#484848"/>
<path class="l" d="M1425 502.500H1660"/>
<path stroke="#464646" d="M1456.500 503V706M1425 542.500H1660M1425 565.500H1660M1425 588.500H1660M1425 627.500H1660M1425 667.500H1660M1425 706.500H1660"/>
<rect x="1425" y="503" width="31" height="39" fill="#4a4a4a"/>
<rect x="1457" y="504" width="203" height="38" fill="#6a6a6a"/>
<path d="M1457.500 517V505.500H1469M1481 505.500H1492.500V517M1457.500 530V540.500H1469M1481 540.500H1492.500V530" fill="none" stroke="#f2f2f2" stroke-width="1.300"/>
<text x="1475" y="531" text-anchor="middle" style="font-family:'Liberation Serif',serif;font-size:21px;fill:#d8d8d8">T</text>
<text x="1501" y="528" style="font-size:11px" textLength="81">KEEP LEARNING</text>
<use href="#eye" x="1441" y="523"/><use href="#eye" x="1441" y="554"/><use href="#eye" x="1441" y="577"/><use href="#eye" x="1441" y="609"/><use href="#eye" x="1441" y="648"/>
<path d="M1461 549 1464.500 554 1461 559M1461 572 1464.500 577 1461 582" fill="none" stroke="#aaa"/>
<use href="#fold" x="1471" y="548"/><use href="#fold" x="1471" y="571"/>
<text x="1498" y="559.500">斜参考线</text>
<text x="1498" y="582.500">斜面</text>
<rect x="1459.500" y="592.500" width="31" height="31" fill="#bdbdbd" stroke="#1c1c1c"/>
<rect x="1460" y="593" width="30" height="22" fill="url(#g4)"/>
<path d="M1462 618H1488" stroke="#111"/><path d="M1475 616.500 1472.500 620H1477.500Z" fill="#111"/>
<rect x="1494.500" y="600" width="7" height="6.500" rx="2.500" fill="none" stroke="#bbb" stroke-width="1.400"/><rect x="1494.500" y="606" width="7" height="7" rx="2.500" fill="none" stroke="#bbb" stroke-width="1.400"/>
<rect x="1506.500" y="592.500" width="24" height="31" fill="#fff" stroke="#1c1c1c"/>
<text x="1541" y="613">渐变填充 1</text>
<rect x="1459.500" y="632.500" width="24" height="30" fill="#fff" stroke="#1c1c1c"/>
<text x="1493" y="652">图层 1</text>
<rect x="1434.500" y="680.500" width="11" height="11" fill="none" stroke="#3f3f3f"/>
<rect x="1459.500" y="671.500" width="24" height="30" fill="#fff" stroke="#1c1c1c"/>
<text x="1493" y="691">背景</text>
<rect x="1634" y="685" width="9" height="7" fill="none" stroke="#d0d0d0" stroke-width="1.200"/><path d="M1636 685V682.500C1636 680 1641 680 1641 682.500V685" fill="none" stroke="#d0d0d0"/><circle cx="1638.500" cy="688.500" r="1" fill="#d0d0d0"/>
<!-- layer footer -->
<path class="l" d="M1425 815.500H1674"/>
<rect x="1425" y="840" width="249" height="2" fill="#3a3a3a"/>
<rect x="1425" y="842" width="249" height="5.500" fill="#4b4b4b"/>
<use href="#grip" transform="translate(1549 844) scale(.9 .8)"/>
<path d="M1480 824.500H1475C1470.500 824.500 1470.500 831 1475 831H1480M1480 824.500H1483C1487.500 824.500 1487.500 831 1483 831H1480M1475 827.800H1484" fill="none" stroke="#8c8c8c" stroke-width="1.300"/>
<text x="1501" y="833" style="font-family:'Liberation Serif',serif;font-style:italic;font-size:16px;fill:#d0d0d0">fx</text>
<path d="M1513 836H1518L1515.500 838.500Z" fill="#ddd"/>
<rect x="1526" y="822" width="13" height="10" fill="#dcdcdc"/><circle cx="1532.500" cy="827" r="3.200" fill="#444"/>
<circle cx="1560.500" cy="828" r="5.500" fill="#6a6a6a" stroke="#d0d0d0"/><path d="M1564.500 824 1556.500 832A5.500 5.500 0 0 0 1564.500 824Z" fill="#d0d0d0"/>
<path d="M1567 836H1572L1569.500 838.500Z" fill="#ddd"/>
<path d="M1581 822H1586L1587 824H1593V833H1581Z" fill="#d8d8d8"/>
<path d="M1609 823.500H1619.500V833H1612L1609 830ZM1609 830H1612.500V833" fill="none" stroke="#d8d8d8" stroke-width="1.200"/>
<path class="ic" d="M1635 825H1646M1636.500 825 1637 834H1644L1644.500 825M1638 825V823H1643V825M1639 827V832M1642 827V832" style="stroke-width:1.100;stroke:#d8d8d8"/>

<!-- red annotation -->
<rect x="1414.500" y="497.500" width="252" height="49" fill="none" stroke="#e61f26" stroke-width="2.600"/>
</svg>
</body>
</html>
